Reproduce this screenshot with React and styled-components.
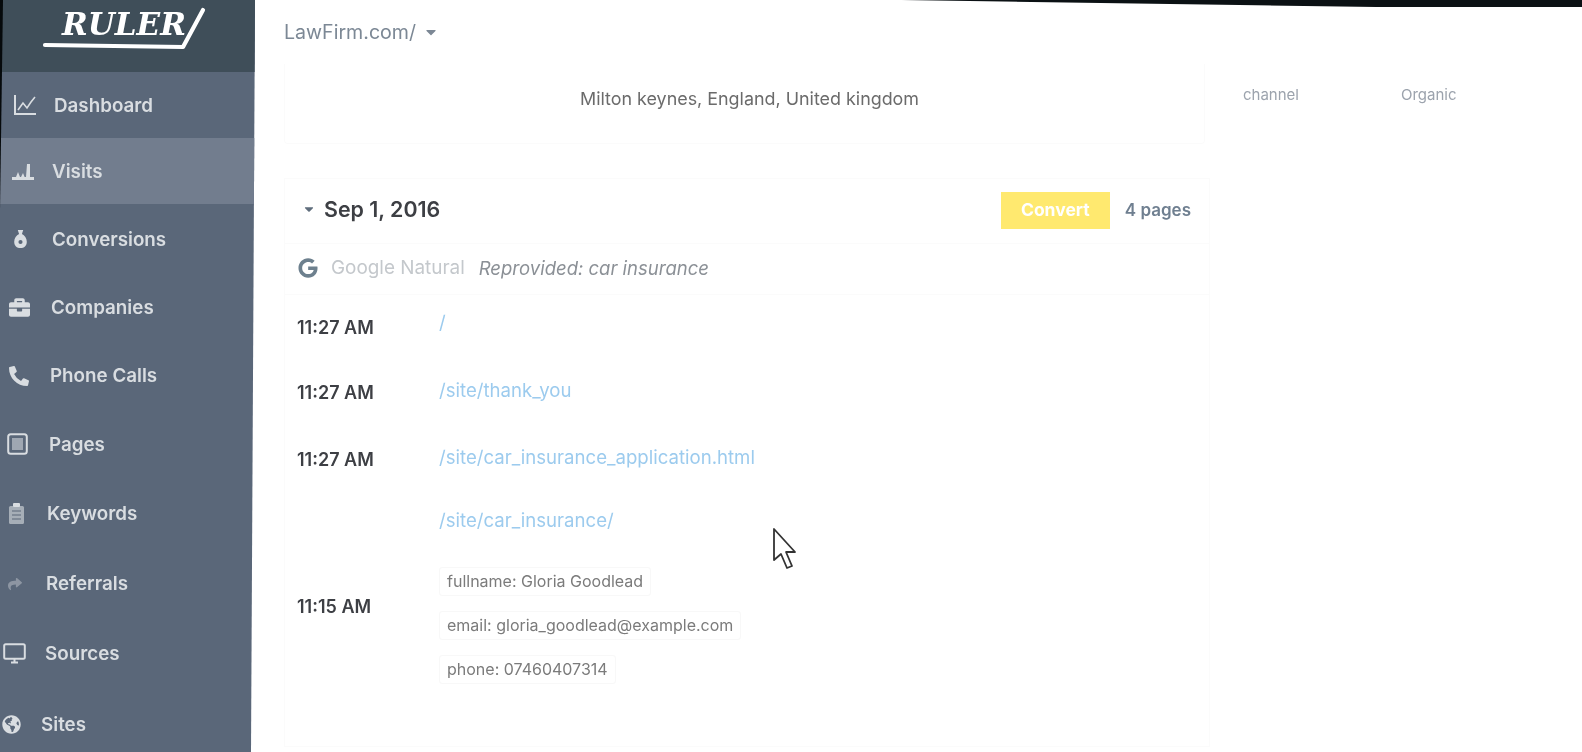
import React from 'react';
import styled, { createGlobalStyle } from 'styled-components';
import { FaBriefcase, FaPhoneAlt, FaGlobeAmericas, FaGoogle, FaCaretDown, FaShare } from 'react-icons/fa';

const Global = createGlobalStyle`
    html,body{margin:0;padding:0;height:100%;background:#fff;overflow:hidden;}
    body{font-family:"Inter","Open Sans","Liberation Sans",sans-serif;}
`
const Shell = styled.div`
    display:flex;width:1582px;height:752px;position:relative;overflow:hidden;background:#fff;filter:blur(.55px);
`
const Sidebar = styled.aside`
    width:255px;flex:none;display:flex;flex-direction:column;background:#5a6779;
    clip-path:polygon(0 0,255px 0,251px 100%,0 100%);
`
const Brand = styled.div`
    height:72px;flex:none;background:#3f4e59;position:relative;display:flex;justify-content:center;
`
const BrandName = styled.span`
    font-family:"DejaVu Serif","Liberation Serif",serif;font-style:italic;font-weight:700;font-size:31px;
    color:#fff;margin:6px 0 0 -7px;line-height:36px;height:36px;
`
const Swoosh = styled.svg`
    position:absolute;left:42px;top:4px;
`
const NavItem = styled.a`
    display:flex;align-items:center;height:${p => p.$h}px;padding-left:${p => p.$x}px;flex:none;
    background:${p => p.$active ? '#727d8e' : 'transparent'};
    color:#d9dde1;font-size:18.8px;font-weight:600;
`
const NavIcon = styled.span`
    width:${p => p.$w}px;flex:none;display:flex;align-items:center;color:#d9dde1;
    opacity:${p => p.$dim ? .4 : 1};
`
const Main = styled.main`
    flex:1;display:flex;flex-direction:column;min-width:0;
`
const TopBar = styled.header`
    height:64px;flex:none;display:flex;align-items:center;padding-left:29px;gap:7px;
    color:#7c8895;font-size:19.6px;
`
const Summary = styled.div`
    display:flex;height:80px;flex:none;margin-left:29px;
`
const SummaryCard = styled.div`
    width:921px;flex:none;border:1px solid #fbfbfb;border-top:0;border-radius:0 0 4px 4px;
    display:flex;padding:24px 0 0 295px;box-sizing:border-box;color:#6b6b6b;font-size:17.9px;
`
const SummarySide = styled.dl`
    margin:0;display:flex;padding:21px 0 0 38px;color:#9ca3ad;font-size:15px;
`
const SideTerm = styled.dt`
    width:158px;
`
const SideValue = styled.dd`
    margin:0;
`
const DayCard = styled.section`
    margin:34px 0 0 29px;width:926px;padding-bottom:26px;border:1px solid #fbfbfb;box-sizing:border-box;
`
const DayHead = styled.div`
    height:64px;display:flex;align-items:center;padding:0 18px 0 18px;
`
const Caret = styled.span`
    display:flex;color:#5f6d7c;font-size:14px;margin:-5px 8px 0 -1px;
`
const DayTitle = styled.h2`
    margin:-4px 0 0;font-size:21.4px;font-weight:600;color:#3d3f44;flex:1;
`
const ConvertButton = styled.button`
    width:109px;height:37px;border:0;background:#ffe96f;color:#fff;font:700 17.5px "Inter",sans-serif;padding:0 0 2px;margin:-2px 0 0 -1px;
`
const PageCount = styled.span`
    margin:-2px 0 0 15px;color:#6f7f90;font-size:17px;font-weight:600;
`
const SourceRow = styled.div`
    height:52px;display:flex;align-items:center;padding:0 0 3px 13px;
    border-top:1px solid #fbfbfb;border-bottom:1px solid #fbfbfb;box-sizing:border-box;
`
const SourceIcon = styled.span`
    display:flex;color:#6d808e;font-size:20px;margin-right:13px;
`
const SourceName = styled.span`
    color:#c4c8cc;font-size:18.9px;margin-right:14px;
`
const Query = styled.em`
    color:#8b9096;font-size:18.5px;
`
const Visit = styled.div`
    display:grid;grid-template-columns:142px 1fr;align-items:center;height:${p => p.$h}px;padding-left:12px;
`
const Time = styled.time`
    color:#3d3f44;font-size:18px;font-weight:600;
`
const Path = styled.a`
    display:block;color:#9ccbee;font-size:18.6px;margin-top:${p => p.$up || 0}px;
`
const VisitBody = styled.div`
    align-self:start;padding-top:16px;
`
const Detail = styled.div`
    display:flex;flex-direction:column;align-items:flex-start;gap:15px;margin-top:36px;
`
const Tag = styled.span`
    border:1px solid #f8f8f8;border-radius:3px;padding:0 7px;height:29px;line-height:27px;box-sizing:border-box;
    color:#7b7b7b;font-size:16px;
`
const TopEdge = styled.div`
    position:absolute;left:0;top:0;width:100%;height:7px;background:#0b1114;
    clip-path:polygon(57% 0,100% 0,100% 100%,87% 100%);
`
const LeftEdge = styled.div`
    position:absolute;left:0;top:0;width:3px;height:210px;background:#060a0c;
    clip-path:polygon(0 0,100% 0,0 100%);
`
const Pointer = styled.svg`
    position:absolute;left:772px;top:527px;
`

const line = { fill: 'none', stroke: 'currentColor', strokeWidth: 2 };

const DashboardIcon = () => (
    <svg width="24" height="22" viewBox="0 0 24 22">
        <path d="M2 1v19h21" {...line} />
        <path d="M5 16l5-7 4 5 4-6 4-5" {...line} strokeWidth="1.6" />
    </svg>
);
const VisitsIcon = () => (
    <svg width="22" height="18" viewBox="0 0 22 18" fill="currentColor">
        <path d="M0 15h22v3H0z" />
        <path d="M4 15l2-5 2 5zM9 15l2-4 2 5zM14 15l1-13h3v13z" />
    </svg>
);
const BagIcon = () => (
    <svg width="13" height="18" viewBox="0 0 14 20" fill="currentColor">
        <path fillRule="evenodd" d="M4 0h6L8.600 4.500C11.500 6 14 9 14 13c0 4.500-3 7-7 7s-7-2.500-7-7c0-4 2.500-7 5.400-8.500zM7 11a2.300 2.300 0 100 4.600 2.300 2.300 0 000-4.600z" />
    </svg>
);
const PagesIcon = () => (
    <svg width="21" height="22" viewBox="0 0 21 22">
        <rect x="1.200" y="1.200" width="18.600" height="19.600" rx="2.500" {...line} />
        <rect x="5" y="5" width="11" height="12" fill="currentColor" opacity=".55" />
    </svg>
);
const KeywordsIcon = () => (
    <svg width="17" height="22" viewBox="0 0 17 22">
        <rect x="1" y="3" width="15" height="18" rx="1.500" fill="currentColor" opacity=".6" />
        <rect x="5" y="0" width="7" height="4" rx="1" fill="currentColor" />
        <path d="M4 8h9M4 12h9M4 16h9" stroke="#5a6779" strokeWidth="1.200" />
    </svg>
);
const SourcesIcon = () => (
    <svg width="23" height="21" viewBox="0 0 23 21">
        <rect x="1.200" y="1.200" width="20.600" height="14.600" rx="1.500" {...line} />
        <path d="M8 19.500h7M11.500 16v3" {...line} />
    </svg>
);

const items = [
    { label: 'Dashboard', h: 66, x: 13, w: 41, icon: <DashboardIcon /> },
    { label: 'Visits', h: 66, x: 12, w: 40, active: true, icon: <VisitsIcon /> },
    { label: 'Conversions', h: 70, x: 14, w: 38, icon: <BagIcon /> },
    { label: 'Companies', h: 67, x: 9, w: 42, icon: <FaBriefcase size={21} /> },
    { label: 'Phone Calls', h: 69, x: 9, w: 41, icon: <FaPhoneAlt size={20} /> },
    { label: 'Pages', h: 68, x: 7, w: 42, icon: <PagesIcon /> },
    { label: 'Keywords', h: 71, x: 8, w: 39, icon: <KeywordsIcon /> },
    { label: 'Referrals', h: 69, x: 8, w: 38, dim: true, icon: <FaShare size={14} /> },
    { label: 'Sources', h: 71, x: 3, w: 42, icon: <SourcesIcon /> },
    { label: 'Sites', h: 70, x: 2, w: 39, icon: <FaGlobeAmericas size={19} /> },
];

const App = () => {
    return (
        <>
            <Global />
            <Shell>
                <Sidebar>
                    <Brand>
                        <BrandName>RULER</BrandName>
                        <Swoosh width="170" height="46" viewBox="0 0 170 46">
                            <path d="M3 41l138 2L161 6" fill="none" stroke="#fff" strokeWidth="4.200" strokeLinecap="round" strokeLinejoin="round" />
                        </Swoosh>
                    </Brand>
                    {items.map(item => (
                        <NavItem key={item.label} $h={item.h} $x={item.x} $active={item.active}>
                            <NavIcon $w={item.w} $dim={item.dim}>{item.icon}</NavIcon>
                            {item.label}
                        </NavItem>
                    ))}
                </Sidebar>
                <Main>
                    <TopBar>
                        LawFirm.com/
                        <FaCaretDown size={16} />
                    </TopBar>
                    <Summary>
                        <SummaryCard>Milton keynes, England, United kingdom</SummaryCard>
                        <SummarySide>
                            <SideTerm>channel</SideTerm>
                            <SideValue>Organic</SideValue>
                        </SummarySide>
                    </Summary>
                    <DayCard>
                        <DayHead>
                            <Caret><FaCaretDown /></Caret>
                            <DayTitle>Sep 1, 2016</DayTitle>
                            <ConvertButton>Convert</ConvertButton>
                            <PageCount>4 pages</PageCount>
                        </DayHead>
                        <SourceRow>
                            <SourceIcon><FaGoogle /></SourceIcon>
                            <SourceName>Google Natural</SourceName>
                            <Query>Reprovided: car insurance</Query>
                        </SourceRow>
                        <Visit $h={64}>
                            <Time>11:27 AM</Time>
                            <Path $up={-10}>/</Path>
                        </Visit>
                        <Visit $h={66}>
                            <Time>11:27 AM</Time>
                            <Path $up={-5}>/site/thank_you</Path>
                        </Visit>
                        <Visit $h={68}>
                            <Time>11:27 AM</Time>
                            <Path $up={-4}>/site/car_insurance_application.html</Path>
                        </Visit>
                        <Visit $h={227}>
                            <Time>11:15 AM</Time>
                            <VisitBody>
                                <Path>/site/car_insurance/</Path>
                                <Detail>
                                    <Tag>fullname: Gloria Goodlead</Tag>
                                    <Tag>email: gloria_goodlead@example.com</Tag>
                                    <Tag>phone: 07460407314</Tag>
                                </Detail>
                            </VisitBody>
                        </Visit>
                    </DayCard>
                </Main>
                <TopEdge />
                <LeftEdge />
                <Pointer width="26" height="44" viewBox="0 0 26 44">
                    <path d="M2 2v31l7-6 6 14 5-2-6-14h9z" fill="#fff" stroke="#333" strokeWidth="1.800" strokeLinejoin="round" />
                </Pointer>
            </Shell>
        </>
    );
}

export default App;
